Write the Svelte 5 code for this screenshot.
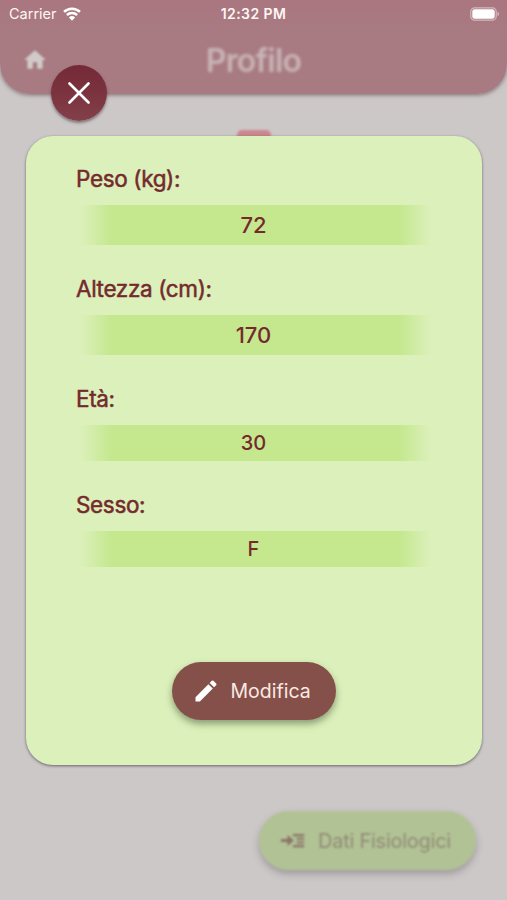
<script>
  let time = "12:32 PM";

  const fields = [
    { label: "Peso (kg):", value: "72", tall: true },
    { label: "Altezza (cm):", value: "170", tall: true },
    { label: "Età:", value: "30", tall: false },
    { label: "Sesso:", value: "F", tall: false },
  ];
</script>

<main class="screen">
  <div class="page">
    <header>
      <svg class="home" viewBox="0 0 24 24">
        <path d="M10 20v-6h4v6h5v-8h3L12 3 2 12h3v8z" />
      </svg>
      <h1>Profilo</h1>
    </header>
    <div class="tab"></div>
    <button class="data-button">
      <svg viewBox="0 0 28 20">
        <path d="M1 8.500h7V4l7 6-7 6v-4.500H1z" />
        <path d="M14 3h12v2.500H14zM18 7h8v2.200h-8zM18 11h8v2.200h-8zM14 14.800h12v2.500H14z" />
      </svg>
      <span>Dati Fisiologici</span>
    </button>
  </div>

  <div class="overlay">
    <div class="status">
      <div class="carrier">
        <span>Carrier</span>
        <svg class="wifi" viewBox="0 0 18 14">
          <path d="M1 4.900a11.600 11.600 0 0 1 16 0" />
          <path d="M3.900 8a7.400 7.400 0 0 1 10.200 0" />
          <path class="dot" d="M9 13.700L5.900 10.500a4.500 4.500 0 0 1 6.200 0z" />
        </svg>
      </div>
      <span class="time">{time}</span>
      <svg class="battery" viewBox="0 0 30 14">
        <rect class="case" x=".8" y=".8" width="25.400" height="12.400" rx="3.800" />
        <rect x="2.300" y="2.300" width="22.400" height="9.400" rx="2.300" />
        <path class="cap" d="M27.500 4.800c2 .7 2 3.700 0 4.400z" />
      </svg>
    </div>

    <button class="close" aria-label="Chiudi">
      <svg viewBox="0 0 22 22">
        <path d="M1.500 1.500l19 19M20.500 1.500l-19 19" />
      </svg>
    </button>

    <section class="card">
      {#each fields as field}
        <div class="field">
          <div class="label">{field.label}</div>
          <div class="value" class:tall={field.tall}>{field.value}</div>
        </div>
      {/each}
      <button class="edit">
        <svg viewBox="0 0 24 24">
          <path d="M3 17.250V21h3.750L17.810 9.940l-3.750-3.750L3 17.250zM20.710 7.040a1 1 0 0 0 0-1.410l-2.340-2.340a1 1 0 0 0-1.410 0l-1.830 1.830 3.750 3.750 1.830-1.830z" />
        </svg>
        <span>Modifica</span>
      </button>
    </section>
  </div>
</main>

<style>
  :global(body) {
    margin: 0;
  }

  .screen {
    position: relative;
    width: 507px;
    height: 900px;
    overflow: hidden;
    background: #cdc8c8;
    font-family: Inter, "Liberation Sans", sans-serif;
  }

  button {
    border: 0;
    padding: 0;
    font-family: inherit;
    cursor: pointer;
  }

  .page {
    display: flex;
    flex-direction: column;
    align-items: center;
    height: 900px;
  }

  header {
    display: grid;
    grid-template-columns: 70px 1fr 70px;
    align-items: center;
    box-sizing: border-box;
    width: 100%;
    height: 94px;
    padding-top: 27px;
    border-radius: 0 0 30px 30px;
    background: linear-gradient(#aa7680, #a87a82 30px);
    box-shadow: 0 1px 4px rgba(70, 50, 55, 0.6);
  }

  .home {
    width: 26px;
    margin: 0 0 2px 22px;
    fill: #d0cbc9;
    filter: blur(1.2px);
  }

  h1 {
    margin: 0;
    text-align: center;
    font-size: 32px;
    font-weight: 600;
    letter-spacing: -0.8px;
    color: #c9b5b6;
    filter: blur(1.4px);
  }

  .tab {
    width: 34px;
    height: 14px;
    margin-top: 36px;
    border-radius: 5px;
    background: #cb8790;
    filter: blur(1.2px);
  }

  .data-button {
    display: flex;
    align-items: center;
    gap: 10px;
    width: 217px;
    height: 59px;
    margin: auto 31px 30px auto;
    padding-left: 21px;
    border-radius: 30px;
    background: #b1c295;
    box-shadow: 0 4px 7px rgba(90, 85, 90, 0.4);
    color: #918b75;
    font-size: 20px;
    letter-spacing: -0.25px;
    filter: blur(1.3px);
  }

  .data-button svg {
    width: 26px;
    height: 19px;
    margin-right: 2px;
    flex: none;
    fill: #8b7468;
  }

  .data-button span {
    white-space: nowrap;
  }

  .overlay {
    position: absolute;
    inset: 0;
    display: flex;
    flex-direction: column;
  }

  .status {
    display: grid;
    grid-template-columns: 1fr auto 1fr;
    align-items: center;
    height: 27px;
    padding: 0 7px 0 9px;
    color: #fff6f3;
  }

  .carrier {
    display: flex;
    align-items: center;
    gap: 6px;
    font-size: 14.500px;
  }

  .wifi {
    width: 18px;
    height: 14px;
    fill: none;
    stroke: #fff;
    stroke-width: 2.500;
  }

  .wifi .dot {
    fill: #fff;
    stroke: none;
  }

  .time {
    margin-right: 2px;
    font-size: 14px;
    font-weight: 600;
    letter-spacing: 0.4px;
  }

  .battery {
    justify-self: end;
    width: 30px;
    height: 14px;
    fill: #fff;
  }

  .battery .case {
    fill: none;
    stroke: #d5b9bd;
    stroke-width: 1.200;
  }

  .battery .cap {
    fill: #d5b9bd;
  }

  .close {
    display: grid;
    place-items: center;
    width: 56px;
    height: 56px;
    margin: 38px 0 0 51px;
    border-radius: 50%;
    background: linear-gradient(#742936, #7c3441 55%, #82404a);
    box-shadow: 0 2px 3px rgba(50, 30, 35, 0.5);
  }

  .close svg {
    width: 22px;
    height: 22px;
    stroke: #fff;
    stroke-width: 2.600;
    stroke-linecap: round;
  }

  .card {
    display: flex;
    flex-direction: column;
    box-sizing: border-box;
    width: 456px;
    height: 629px;
    margin: 15px 0 0 26px;
    padding: 27px 51px 0 50px;
    border-radius: 27px;
    background: #dcf0bb;
    box-shadow: 0 1px 3px rgba(60, 60, 65, 0.7);
  }

  .field {
    margin-bottom: 28.500px;
    color: #742a2d;
  }

  .label {
    height: 32px;
    line-height: 32px;
    margin-bottom: 10px;
    font-size: 22.500px;
    letter-spacing: -0.35px;
    -webkit-text-stroke: 0.5px #742a2d;
  }

  .value {
    display: flex;
    align-items: center;
    justify-content: center;
    box-sizing: border-box;
    height: 35.500px;
    padding-top: 1px;
    background: linear-gradient(
      to right,
      transparent 4px,
      #c5e88f 35px,
      #c5e88f calc(100% - 31px),
      transparent
    );
    font-size: 20px;
    font-weight: 500;
  }

  .tall {
    height: 39.500px;
    padding-top: 0;
    font-size: 22px;
  }

  .edit {
    display: flex;
    align-items: center;
    gap: 11px;
    align-self: center;
    width: 164px;
    height: 58px;
    margin-top: 67px;
    padding-left: 20px;
    border-radius: 29px;
    background: #855049;
    box-shadow: 0 4px 7px rgba(60, 75, 45, 0.5);
    color: #fbe9e3;
    font-size: 19.500px;
  }

  .edit svg {
    width: 28px;
    height: 28px;
    fill: #fff;
  }
</style>
